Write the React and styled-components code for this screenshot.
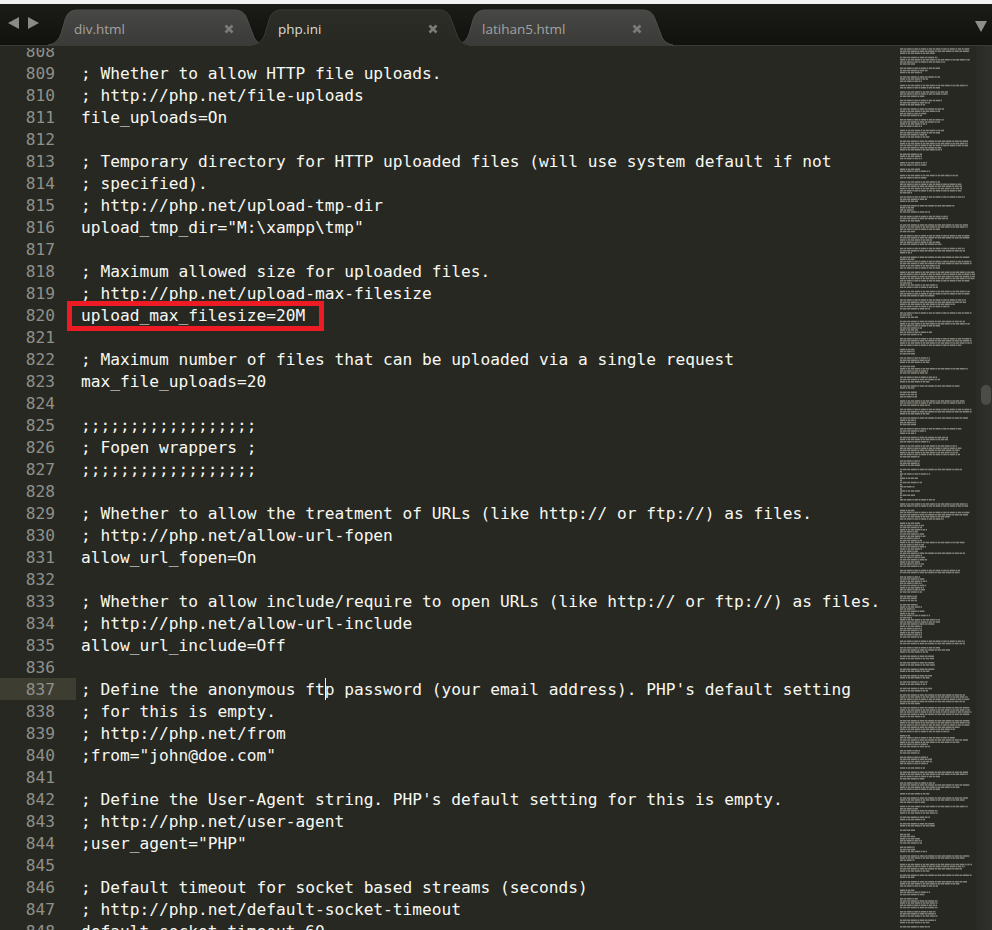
import React from 'react';
import styled, { createGlobalStyle } from 'styled-components';

const GlobalStyle = createGlobalStyle`
  html, body {
    margin: 0;
    padding: 0;
    background: #272822;
  }
`;

const Window = styled.div`
  width: 992px;
  height: 930px;
  display: flex;
  flex-direction: column;
  overflow: hidden;
  background: #272822;
`;

const TopEdge = styled.div`
  height: 4px;
  flex: none;
  background: #f2f2f2;
`;

const TabBar = styled.div`
  height: 42px;
  flex: none;
  display: flex;
  align-items: flex-end;
  box-sizing: border-box;
  background: linear-gradient(#1b1b18, #11110e);
  border-bottom: 1px solid #3a3a36;
`;

const NavArrows = styled.div`
  width: 48px;
  height: 41px;
  flex: none;
  display: flex;
  align-items: center;
  gap: 9px;
  padding: 0 0 3px 8px;
  box-sizing: border-box;
`;

const TabStrip = styled.div`
  flex: 1;
  display: flex;
  height: 35px;
`;

const Tab = styled.div`
  position: relative;
  width: 217px;
  height: 35px;
  flex: none;
  display: flex;
  align-items: center;
  justify-content: space-between;
  box-sizing: border-box;
  padding: 2px 31px 0 26px;
  z-index: ${(p) => (p.$active ? 2 : 1)};
  & + & {
    margin-left: -13px;
  }
`;

const TabShapeSvg = styled.svg`
  position: absolute;
  left: 0;
  top: 0;
  overflow: visible;
`;

const TabLabel = styled.span`
  position: relative;
  font-family: 'Open Sans', 'Noto Sans', sans-serif;
  font-size: 13.5px;
  color: ${(p) => (p.$active ? '#dcdcd8' : '#a3a39e')};
`;

const CloseIcon = styled.svg`
  position: relative;
  flex: none;
`;

const MenuArrow = styled.svg`
  flex: none;
  margin: 3px 5px 0 0;
  align-self: center;
`;

const Body = styled.div`
  flex: 1;
  min-height: 0;
  display: flex;
`;

const CodeArea = styled.div`
  flex: 1;
  min-width: 0;
  overflow: hidden;
  border-top: 2px solid #272822;
`;

const CodeClip = styled.div`
  height: 100%;
  overflow: hidden;
`;

const CodeScroll = styled.div`
  margin-top: -8px;
`;

const Row = styled.div`
  display: flex;
  height: 22px;
  line-height: 24px;
  font-family: 'DejaVu Sans Mono', 'Liberation Mono', monospace;
  font-size: 16.2px;
  white-space: pre;
`;

const Gutter = styled.div`
  width: 76px;
  flex: none;
  box-sizing: border-box;
  padding-right: 21px;
  text-align: right;
  color: #8f908a;
  background: ${(p) => (p.$current ? '#3e3d32' : 'transparent')};
`;

const Code = styled.div`
  position: relative;
  padding-left: 5px;
  color: #f8f8f2;
`;

const Caret = styled.span`
  position: absolute;
  left: 248.5px;
  top: 0;
  width: 1px;
  height: 22px;
  background: #f8f8f0;
`;

const RedBox = styled.span`
  position: absolute;
  left: -9px;
  top: -3px;
  width: 257px;
  height: 30px;
  box-sizing: border-box;
  border: 5px solid #ed1c24;
`;

const MinimapColumn = styled.div`
  width: 81px;
  flex: none;
  overflow: hidden;
`;

const MinimapSvg = styled.svg`
  display: block;
  filter: blur(0.45px);
`;

const ScrollTrack = styled.div`
  position: relative;
  width: 16px;
  flex: none;
  background: linear-gradient(90deg, #2a2a27, #30302d);
`;

const ScrollThumb = styled.div`
  position: absolute;
  left: 5px;
  top: 339px;
  width: 10px;
  height: 20px;
  border-radius: 5px;
  background: #4b4b48;
`;

const lines = [
  '',
  '; Whether to allow HTTP file uploads.',
  '; http://php.net/file-uploads',
  'file_uploads=On',
  '',
  '; Temporary directory for HTTP uploaded files (will use system default if not',
  '; specified).',
  '; http://php.net/upload-tmp-dir',
  'upload_tmp_dir="M:\\xampp\\tmp"',
  '',
  '; Maximum allowed size for uploaded files.',
  '; http://php.net/upload-max-filesize',
  'upload_max_filesize=20M',
  '',
  '; Maximum number of files that can be uploaded via a single request',
  'max_file_uploads=20',
  '',
  ';;;;;;;;;;;;;;;;;;',
  '; Fopen wrappers ;',
  ';;;;;;;;;;;;;;;;;;',
  '',
  '; Whether to allow the treatment of URLs (like http:// or ftp://) as files.',
  '; http://php.net/allow-url-fopen',
  'allow_url_fopen=On',
  '',
  '; Whether to allow include/require to open URLs (like http:// or ftp://) as files.',
  '; http://php.net/allow-url-include',
  'allow_url_include=Off',
  '',
  "; Define the anonymous ftp password (your email address). PHP's default setting",
  '; for this is empty.',
  '; http://php.net/from',
  ';from="john@doe.com"',
  '',
  "; Define the User-Agent string. PHP's default setting for this is empty.",
  '; http://php.net/user-agent',
  ';user_agent="PHP"',
  '',
  '; Default timeout for socket based streams (seconds)',
  '; http://php.net/default-socket-timeout',
  'default_socket_timeout=60',
];

const FIRST_LINE = 808;
const CURRENT_LINE = 837;
const BOXED_LINE = 820;

// line widths of the minimap in px, paragraphs split by |
const minimapText =
  '70 69 35|38 70 45 15|40 28 22|40 28 22|68 40|48 48 25|42 30 25|44 40 27 22|44 40 27 22|44 40 27 30|' +
  '68 68 68 42 42|22 22 22|27 27|20 30|58 27|40 62 62 62 62 12|65 27 18|55 14 14 30|48 48 20|' +
  '68 68 40 15|70 70 32 40 42|65 65 12|70 15 72 72 40 40|75 75 75 75 70 12 38 38|70 70 35|66 66 55 50 30|' +
  '72 12 18|65 70 40 22 18 32 22|72 72 72 62|15 15 15|30 30 30|15 68 28 28|37 40 30|60 15|17 17 17|' +
  '65 65 30|72 72 30|68 16 16 16|62 26 16|48 48 30|57 62 60 58 60 20|20 20 20|' +
  '62 2 30 2 18 2 22 2 15 2 20 2 15 2 35|68 68|15 70 68 50 44|' +
  '20 24 22 27 18 24 26 20 22 65 24 26 22 18 65 22 25 27 20 24 22|60 60|' +
  '20 25 27 22 26 24 25 22|17 17 17|18 22 15 25 15 30 12 40 40 35 22 22 22 22 22 22|65 65|40 50 28|34 34|35 35|35 30|32 30|28 27|32 28|' +
  '65 68 70 65 20|70 70 72 70 25|70 70 70 60 55 50|10 55 68 60 28 30|20 20|28 32 32 28|25|' +
  '68 68 40 25|35 70 60 40|30|68 65 25|68 18 38 38|30 25|35 35|15|10 15 20 22 22|15 15 27|70 65 15|' +
  '72 65 62 30|72 15|67 60 38|15 30 25|18 38 38 37 38|36 36 38|36 30|30';

const minimapRows = minimapText
  .split('|')
  .flatMap((group) => [...group.split(' ').map(Number), 0]);

const TAB_OUTLINE =
  'M0 35 C7 34 10 31 13 24 L17 10 C19 3 23 0 29 0 L187 0 C193 0 197 3 199 9 L205 25 C207 31 211 34 217 35';

const TabShape = ({ active }) => (
  <TabShapeSvg width="217" height="35" viewBox="0 0 217 35">
    <defs>
      <linearGradient id={active ? 'tabActive' : 'tabIdle'} x1="0" y1="0" x2="0" y2="1">
        <stop offset="0" stopColor={active ? '#2c2d27' : '#474745'} />
        <stop offset="1" stopColor={active ? '#272822' : '#3a3a38'} />
      </linearGradient>
    </defs>
    <path
      d={active ? `${TAB_OUTLINE} V36 H0 Z` : `${TAB_OUTLINE} Z`}
      fill={`url(#${active ? 'tabActive' : 'tabIdle'})`}
    />
    <path d={TAB_OUTLINE} fill="none" stroke={active ? '#3b3b36' : '#4f4f4c'} strokeWidth="1" />
  </TabShapeSvg>
);

const EditorTab = ({ name, active }) => (
  <Tab $active={active}>
    <TabShape active={active} />
    <TabLabel $active={active}>{name}</TabLabel>
    <CloseIcon width="10" height="10" viewBox="0 0 10 10">
      <path d="M1.5 1.5 L8.5 8.5 M8.5 1.5 L1.5 8.5" stroke="#7b7b78" strokeWidth="2.6" />
    </CloseIcon>
  </Tab>
);

// varied dashes so the lines read as words at minimap scale
const dashes = ['3.5 .6 2 .6 5 .6 1.5 .6', '2 .6 4 .6 3 .6 6 .6', '5 .6 1.5 .6 2.5 .6 3.5 .6'];

const Minimap = () => {
  const pitch = 882 / minimapRows.length;
  return (
    <MinimapSvg width="81" height="884" viewBox="0 0 81 884">
      {minimapRows.map((width, i) =>
        width ? (
          <line
            key={i}
            x1="5"
            x2={5 + width}
            y1={3 + i * pitch}
            y2={3 + i * pitch}
            stroke="#a9a99f"
            strokeOpacity="0.68"
            strokeWidth="1.5"
            strokeDasharray={dashes[i % dashes.length]}
          />
        ) : null
      )}
    </MinimapSvg>
  );
};

const App = () => (
  <Window>
    <GlobalStyle />
    <TopEdge />
    <TabBar>
      <NavArrows>
        <svg width="11" height="12" viewBox="0 0 11 12">
          <path d="M0 6 L11 0 V12 Z" fill="#8a8a88" />
        </svg>
        <svg width="11" height="12" viewBox="0 0 11 12">
          <path d="M11 6 L0 0 V12 Z" fill="#8a8a88" />
        </svg>
      </NavArrows>
      <TabStrip>
        <EditorTab name="div.html" />
        <EditorTab name="php.ini" active />
        <EditorTab name="latihan5.html" />
      </TabStrip>
      <MenuArrow width="12" height="11" viewBox="0 0 12 11">
        <path d="M0 0 H12 L6 11 Z" fill="#8e8e8c" />
      </MenuArrow>
    </TabBar>
    <Body>
      <CodeArea>
        <CodeClip>
          <CodeScroll>
            {lines.map((text, i) => {
              const number = FIRST_LINE + i;
              return (
                <Row key={number}>
                  <Gutter $current={number === CURRENT_LINE}>{number}</Gutter>
                  <Code>
                    {text}
                    {number === CURRENT_LINE && <Caret />}
                    {number === BOXED_LINE && <RedBox />}
                  </Code>
                </Row>
              );
            })}
          </CodeScroll>
        </CodeClip>
      </CodeArea>
      <MinimapColumn>
        <Minimap />
      </MinimapColumn>
      <ScrollTrack>
        <ScrollThumb />
      </ScrollTrack>
    </Body>
  </Window>
);

export default App;
